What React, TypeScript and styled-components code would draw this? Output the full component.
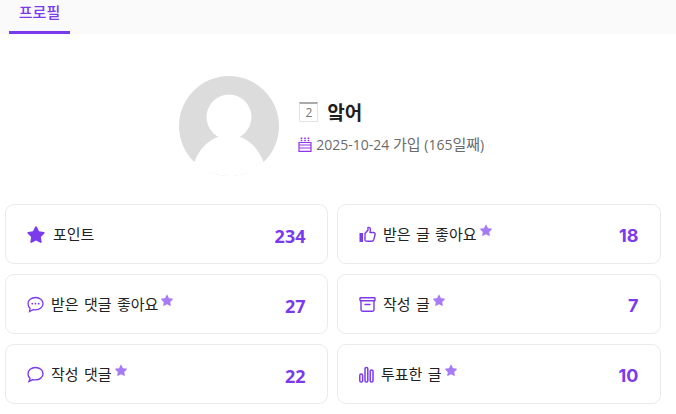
import styled, { createGlobalStyle } from "styled-components";
import type { ReactNode } from "react";

const GlobalStyle = createGlobalStyle`
  html, body {
    margin: 0;
    padding: 0;
    background: #fff;
    font-family: "Open Sans", "Noto Sans CJK KR", sans-serif;
  }
`;

const accent = "#7c3aed";

const StarIcon = ({ size }: { size: number }) => (
  <svg width={size} height={size} viewBox="0 0 24 24" fill="currentColor">
    <path d="M12 1.600c.5 0 .9.3 1.100.7l2.900 6 6.500.9c1 .1 1.400 1.400.7 2.100l-4.800 4.600 1.200 6.500c.2 1-.9 1.800-1.800 1.300L12 20.600l-5.800 3.100c-.9.5-2-.3-1.800-1.300l1.200-6.500-4.800-4.600c-.7-.7-.3-2 .7-2.100l6.500-.9 2.900-6c.2-.4.6-.7 1.100-.7z" />
  </svg>
);

const ThumbIcon = () => (
  <svg width="17" height="17" viewBox="0 0 17 17" fill="none" stroke="currentColor" strokeWidth="1.400" strokeLinejoin="round">
    <rect x="0.500" y="7" width="3.500" height="9" fill="currentColor" stroke="none" />
    <path d="M6 7.500 9 4V1.500c1.500-.5 2.600.6 2.400 2.200L11 6.500h3.500c1.100 0 1.900 1 1.600 2l-1.300 5c-.3 1-1.100 1.700-2.100 1.700H8c-.9 0-1.600-.3-2-.8z" />
  </svg>
);

const BubbleDotsIcon = () => (
  <svg width="17" height="17" viewBox="0 0 17 17" fill="none" stroke="currentColor" strokeWidth="1.300">
    <path d="M8.500 1.500c4.200 0 7.500 2.700 7.500 6.200s-3.300 6.200-7.500 6.200c-.9 0-1.700-.1-2.500-.3L2.500 15.500l.6-3.200C1.800 11.200 1 9.600 1 7.700c0-3.500 3.300-6.200 7.500-6.200z" />
    <circle cx="5.300" cy="7.700" r="0.900" fill="currentColor" stroke="none" />
    <circle cx="8.500" cy="7.700" r="0.900" fill="currentColor" stroke="none" />
    <circle cx="11.700" cy="7.700" r="0.900" fill="currentColor" stroke="none" />
  </svg>
);

const BubbleIcon = () => (
  <svg width="17" height="17" viewBox="0 0 17 17" fill="none" stroke="currentColor" strokeWidth="1.400">
    <path d="M8.500 1.500c4.200 0 7.500 2.700 7.500 6.200s-3.300 6.200-7.500 6.200c-.9 0-1.700-.1-2.500-.3L2 15.500l1.100-3.200C1.800 11.200 1 9.600 1 7.700c0-3.500 3.300-6.200 7.500-6.200z" />
  </svg>
);

const ArchiveIcon = () => (
  <svg width="17" height="17" viewBox="0 0 17 17" fill="none" stroke="currentColor" strokeWidth="1.400" strokeLinecap="round">
    <rect x="1" y="1.700" width="15" height="3" rx="0.500" />
    <path d="M2 4.700v9.100c0 .8.600 1.400 1.400 1.400h10.200c.8 0 1.400-.6 1.400-1.400V4.700" />
    <path d="M6 8.500h5" />
  </svg>
);

const BarsIcon = () => (
  <svg width="15" height="17" viewBox="0 0 15 17" fill="none" stroke="currentColor" strokeWidth="1.500">
    <rect x="0.800" y="8" width="2.800" height="8" rx="1.300" />
    <rect x="6" y="1.500" width="2.800" height="14.500" rx="1.300" />
    <rect x="11.200" y="4" width="2.800" height="12" rx="1.300" />
  </svg>
);

const CakeIcon = () => (
  <svg width="14" height="15" viewBox="0 0 14 15" fill="none" stroke="currentColor" strokeWidth="1.200">
    <path d="M1 5.500h12v8.900H1z" />
    <path d="M1 8h12M1 11h12" />
    <path d="M3.500.5v4M7 .5v4M10.500.5v4" strokeWidth="1.600" strokeDasharray="1.500 .8" />
  </svg>
);

const AvatarArt = () => (
  <svg width="100" height="100" viewBox="0 0 100 100">
    <circle cx="50" cy="50" r="50" fill="#dcdcdc" />
    <circle cx="50" cy="41" r="22.500" fill="#fff" />
    <path d="M15 87C22 68 36 59 50 59s28 9 35 28C76 95 63 100 50 100S24 95 15 87z" fill="#fff" />
  </svg>
);

type Stat = {
  icon: ReactNode;
  label: string;
  value: number;
  gap: number;
  starred?: boolean;
  fontKind: "open" | "inter";
};

const stats: Stat[] = [
  { icon: <StarIcon size={18} />, label: "포인트", value: 234, gap: 8, fontKind: "open" },
  { icon: <ThumbIcon />, label: "받은 글 좋아요", value: 18, gap: 7, starred: true, fontKind: "inter" },
  { icon: <BubbleDotsIcon />, label: "받은 댓글 좋아요", value: 27, gap: 7, starred: true, fontKind: "open" },
  { icon: <ArchiveIcon />, label: "작성 글", value: 7, gap: 7, starred: true, fontKind: "inter" },
  { icon: <BubbleIcon />, label: "작성 댓글", value: 22, gap: 7, starred: true, fontKind: "open" },
  { icon: <BarsIcon />, label: "투표한 글", value: 10, gap: 7, starred: true, fontKind: "inter" },
];

export default function App() {
  return (
    <>
      <GlobalStyle />
      <Page>
        <TabBar>
          <Tab>프로필</Tab>
        </TabBar>
        <Content>
          <Profile>
            <AvatarArt />
            <ProfileText>
              <NameRow>
                <LevelBadge>2</LevelBadge>
                <Name>앜어</Name>
              </NameRow>
              <JoinRow>
                <CakeWrap>
                  <CakeIcon />
                </CakeWrap>
                <span>
                  2025-10-24 <Hangul>가입</Hangul> (165<Hangul>일째</Hangul>)
                </span>
              </JoinRow>
            </ProfileText>
          </Profile>
          <StatGrid>
            {stats.map((s) => (
              <Card key={s.label}>
                <CardLabel>
                  <IconWrap $gap={s.gap}>{s.icon}</IconWrap>
                  <LabelText>{s.label}</LabelText>
                  {s.starred && (
                    <Mark>
                      <StarIcon size={12} />
                    </Mark>
                  )}
                </CardLabel>
                <Value $fontKind={s.fontKind}>{s.value}</Value>
              </Card>
            ))}
          </StatGrid>
        </Content>
      </Page>
    </>
  );
}

const Page = styled.div`
  width: 676px;
  height: 414px;
  overflow: hidden;
  background: #fff;
`;

const TabBar = styled.div`
  height: 34px;
  background: #fafafa;
  padding-left: 9px;
  display: flex;
`;

const Tab = styled.div`
  width: 61px;
  height: 31px;
  border-bottom: 3px solid ${accent};
  color: ${accent};
  font-family: "Noto Sans CJK KR", sans-serif;
  font-size: 15px;
  font-weight: 500;
  line-height: 24px;
  text-align: center;
`;

const Content = styled.div`
  width: 655.500px;
  margin-left: 5px;
  padding-top: 42px;
`;

const Profile = styled.div`
  display: flex;
  align-items: center;
  justify-content: center;
  gap: 20px;
  padding-right: 2px;
  margin-bottom: 28px;
`;

const ProfileText = styled.div`
  display: flex;
  flex-direction: column;
  gap: 10px;
  margin-top: 3px;
`;

const NameRow = styled.div`
  display: flex;
  align-items: center;
  gap: 9px;
`;

const LevelBadge = styled.div`
  width: 19px;
  height: 20px;
  box-sizing: border-box;
  border: 1px solid #e2e2e2;
  border-top: 2px solid #aaa;
  color: #777;
  font-family: "Open Sans", sans-serif;
  font-size: 12px;
  line-height: 18px;
  text-align: center;
`;

const Name = styled.div`
  font-family: "Noto Sans CJK KR", sans-serif;
  font-size: 19px;
  font-weight: 700;
  line-height: 24px;
  color: #1f1f1f;
`;

const JoinRow = styled.div`
  display: flex;
  align-items: center;
  gap: 4px;
  margin-left: -1px;
  font-family: "Open Sans", "Noto Sans CJK KR", sans-serif;
  font-size: 14px;
  line-height: 20px;
  color: #6b6b6b;
`;

const Hangul = styled.span`
  font-family: "Noto Sans CJK KR", sans-serif;
  font-size: 15px;
  line-height: 20px;
`;

const CakeWrap = styled.span`
  display: flex;
  color: #9333ea;
`;

const StatGrid = styled.div`
  display: grid;
  grid-template-columns: 322.500px 323.500px;
  grid-auto-rows: 60px;
  column-gap: 9.500px;
  row-gap: 10px;
`;

const Card = styled.div`
  box-sizing: border-box;
  display: flex;
  align-items: center;
  justify-content: space-between;
  padding: 0 21px;
  border: 1px solid #ebebeb;
  border-radius: 9px;
  background: #fff;
`;

const CardLabel = styled.div`
  display: flex;
  align-items: center;
  color: #222;
`;

const IconWrap = styled.span<{ $gap: number }>`
  display: flex;
  margin-right: ${(p) => p.$gap}px;
  color: ${accent};
`;

const LabelText = styled.span`
  font-family: "Noto Sans CJK KR", sans-serif;
  font-size: 15px;
  word-spacing: 2px;
  line-height: 20px;
`;

const Mark = styled.span`
  display: flex;
  margin: -8px 0 0 3px;
  color: #a67bf5;
`;

const Value = styled.div<{ $fontKind: "open" | "inter" }>`
  font-family: ${(p) => (p.$fontKind === "open" ? '"Open Sans"' : "Inter")}, sans-serif;
  font-size: 18px;
  font-weight: 700;
  line-height: 24px;
  color: ${accent};
  margin-top: 4px;
`;
